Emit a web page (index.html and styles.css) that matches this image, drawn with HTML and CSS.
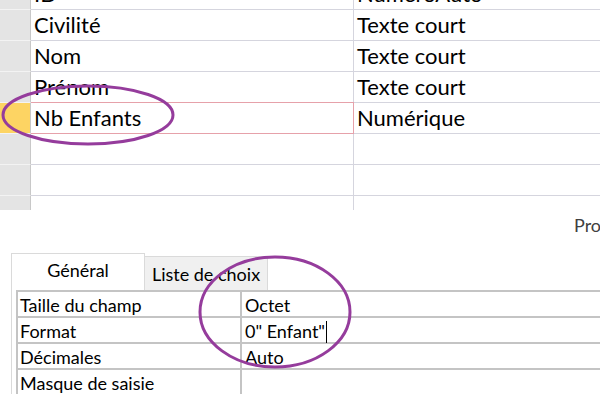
FILE: index.html
```html
<!DOCTYPE html>
<html lang="fr">
<head>
    <meta charset="UTF-8" />
    <title>Nb Enfants - Format</title>
    <link rel="stylesheet" href="styles.css">
</head>
<body>

    <!-- Field list (design view) -->
    <div class="fields">
        <div class="sel"></div><div class="cell">ID</div><div class="cell type">NuméroAuto</div>
        <div class="sel"></div><div class="cell">Civilité</div><div class="cell type">Texte court</div>
        <div class="sel"></div><div class="cell">Nom</div><div class="cell type">Texte court</div>
        <div class="sel"></div><div class="cell">Prénom</div><div class="cell type">Texte court</div>
        <div class="sel current"></div><div class="cell picked">Nb Enfants</div><div class="cell type">Numérique</div>
        <div class="sel"></div><div class="cell"></div><div class="cell type"></div>
        <div class="sel"></div><div class="cell"></div><div class="cell type"></div>
        <div class="sel"></div><div class="cell"></div><div class="cell type"></div>
    </div>

    <!-- Field properties -->
    <div class="props-title">Propriétés du champ</div>
    <div class="props">
        <div class="tabs">
            <div class="tab active">Général</div>
            <div class="tab">Liste de choix</div>
        </div>
        <div class="panel">
            <div class="sheet">
                <div class="label">Taille du champ</div><div class="value">Octet</div>
                <div class="label">Format</div><div class="value">0" Enfant"<span class="caret"></span></div>
                <div class="label">Décimales</div><div class="value">Auto</div>
                <div class="label">Masque de saisie</div><div class="value"></div>
            </div>
        </div>
    </div>

    <!-- Hand-drawn highlight circles -->
    <svg class="marks" width="600" height="394" viewBox="0 0 600 394">
        <ellipse cx="88" cy="115" rx="85" ry="29" />
        <ellipse cx="275" cy="312" rx="75" ry="55" />
    </svg>

</body>
</html>
```

FILE: styles.css
```css
* {
    margin: 0;
    padding: 0;
    box-sizing: border-box;
}
body {
    position: relative;
    width: 600px;
    height: 394px;
    overflow: hidden;
    background: #fff;
    font-family: Lato, "Liberation Sans", sans-serif;
    color: #000;
}

/* top grid */
.fields {
    display: grid;
    grid-template-columns: 31px 323px 1fr;
    grid-auto-rows: 31px;
    height: 231px;
    margin-top: -21px;
    overflow: hidden;
}
.fields .sel {
    background: #e4e4e4;
    border-right: 1px solid #c8c8c8;
    border-bottom: 1px solid #f3f3f3;
}
.fields .sel.current {
    background: #fdd463;
}
.fields .cell {
    padding-left: 3px;
    font-size: 22px;
    line-height: 30px;
    border-bottom: 1px solid #d5d5de;
    white-space: nowrap;
}
.fields .cell:not(.type) {
    border-right: 1px solid #d5d5de;
}
.fields .cell.type {
    padding-left: 3px;
}
.fields .cell.picked {
    border-bottom-color: #e6a1aa;
    border-right-color: #e6a1aa;
    box-shadow: 0 -1px 0 #e6a1aa;
}

/* properties */
.props-title {
    height: 43px;
    padding: 3px 0 0 574px;
    font-size: 18px;
    line-height: 24px;
    color: #404040;
    white-space: nowrap;
    overflow: hidden;
}
.props {
    padding-left: 11px;
}
.tabs {
    display: flex;
    align-items: flex-end;
    height: 37px;
}
.tab {
    width: 123px;
    height: 34px;
    padding-top: 5px;
    text-align: center;
    font-size: 18px;
    line-height: 24px;
    background: #f0f0f0;
    border: 1px solid #dadada;
    border-left: none;
    border-bottom: none;
}
.tab.active {
    width: 134px;
    height: 37px;
    padding-top: 4px;
    background: #fff;
    border-left: 1px solid #dadada;
}
.panel {
    border-left: 1px solid #dadada;
    padding-left: 4px;
}
.sheet {
    display: grid;
    grid-template-columns: 224px 1fr;
    border-top: 2px solid #c4c4c4;
    border-left: 2px solid #c4c4c4;
}
.sheet .label,
.sheet .value {
    height: 26px;
    padding: 3px 0 0 2px;
    font-size: 18px;
    line-height: 21px;
    border-bottom: 2px solid #c4c4c4;
    white-space: nowrap;
}
.sheet .label {
    border-right: 2px solid #c4c4c4;
}
.sheet .value {
    padding-left: 3px;
}
.caret {
    display: inline-block;
    width: 1px;
    height: 22px;
    margin-left: 1px;
    background: #000;
    vertical-align: -5px;
}

/* annotation circles */
.marks {
    position: absolute;
    top: 0;
    left: 0;
    pointer-events: none;
}
.marks ellipse {
    fill: none;
    stroke: #953c9c;
    stroke-width: 3;
}
```
